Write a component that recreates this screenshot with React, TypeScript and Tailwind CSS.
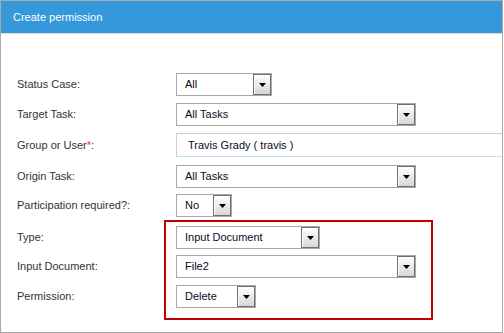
import React from 'react';

const font = { fontFamily: '"Liberation Sans", Arial, sans-serif' };

interface SelectProps {
  value: string;
  width: string;
  className?: string;
}

const Arrow = () => (
  <div className="h-full w-[18px] border border-[#707070] bg-gradient-to-b from-white to-[#d6d6d6] flex items-center justify-center shadow-[inset_1px_1px_0_#fff]">
    <svg width="7" height="4" viewBox="0 0 7 4">
      <polygon points="0,0 7,0 3.5,4" fill="#000" />
    </svg>
  </div>
);

const Select: React.FC<SelectProps> = ({ value, width, className }) => (
  <div className={`h-[23px] ${width} ${className ?? ''} shrink-0 flex items-stretch border border-[#a8a8a8] bg-white`}>
    <span className="flex-1 flex items-center pl-2 text-[11px] text-[#0a0a1e]">{value}</span>
    <Arrow />
  </div>
);

const Label: React.FC<{ children: React.ReactNode; className?: string }> = ({ children, className }) => (
  <div className={`h-[23px] shrink-0 flex items-center text-[11px] text-[#333] ${className ?? ''}`}>{children}</div>
);

export default function App() {
  return (
    <div style={font} className="w-[504px] h-[333px] bg-white">
      <div className="w-[503px] h-[333px] border border-[#a9a9a9] overflow-hidden flex flex-col">
        <div className="h-[32px] bg-[#3498db] flex items-center pl-3 text-[11px] text-white">
          Create permission
        </div>
        <div className="h-px bg-[#dcdcdc]" />

        <div className="flex flex-col pl-4 pt-[39px]">
          <div className="flex">
            <Label className="w-[159px]">Status Case:</Label>
            <Select value="All" width="w-[96px]" />
          </div>
          <div className="flex mt-[7px]">
            <Label className="w-[159px]">Target Task:</Label>
            <Select value="All Tasks" width="w-[240px]" />
          </div>
          <div className="flex mt-[7px]">
            <Label className="w-[159px] h-[24px]">
              Group or User<span className="text-[#e53935]">*</span>:
            </Label>
            <div className="h-[24px] w-[360px] shrink-0 border border-[#cfcfcf] border-b-[#c9dcef] flex items-center pl-[11px] text-[11px] text-[#0a0a1e]">
              Travis Grady ( travis )
            </div>
          </div>
          <div className="flex mt-[8px]">
            <Label className="w-[159px]">Origin Task:</Label>
            <Select value="All Tasks" width="w-[240px]" />
          </div>
          <div className="flex mt-[6px]">
            <Label className="w-[159px]">Participation required?:</Label>
            <Select value="No" width="w-[56px]" />
          </div>

          <div className="flex mt-[3px]">
            <div className="w-[147px] shrink-0 flex flex-col pt-[6px]">
              <Label>Type:</Label>
              <Label className="mt-[6px]">Input Document:</Label>
              <Label className="mt-[7px]">Permission:</Label>
            </div>
            <div className="w-[269px] shrink-0 border-2 border-[#c00000] flex flex-col pl-[10px] pt-[4px] pb-[10px]">
              <Select value="Input Document" width="w-[144px]" />
              <Select value="File2" width="w-[240px]" className="mt-[6px]" />
              <Select value="Delete" width="w-[80px]" className="mt-[7px]" />
            </div>
          </div>
        </div>
      </div>
    </div>
  );
}
